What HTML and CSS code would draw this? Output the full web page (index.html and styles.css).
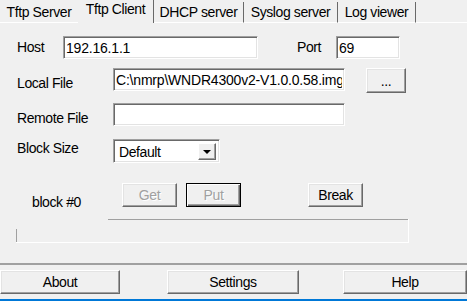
FILE: index.html
```html
<!DOCTYPE html>
<html lang="en">
<head>
    <meta charset="UTF-8">
    <meta name="viewport" content="width=device-width, initial-scale=1.0">
    <title>Tftp Client</title>
    <link rel="stylesheet" href="styles.css">
</head>
<body>
    <div class="window">
        <div class="tabs">
            <div class="tab tab-1">Tftp Server</div>
            <div class="tab tab-active tab-2">Tftp Client</div>
            <div class="tab tab-3">DHCP server</div>
            <div class="tab tab-4">Syslog server</div>
            <div class="tab tab-5">Log viewer</div>
            <div class="tab-fill"></div>
        </div>

        <div class="panel">
            <div class="row row-host">
                <label class="lbl lbl-host" for="host">Host</label>
                <input class="field field-host" id="host" type="text" value="192.16.1.1">
                <label class="lbl lbl-port" for="port">Port</label>
                <input class="field field-port" id="port" type="text" value="69">
            </div>

            <div class="row row-local">
                <label class="lbl lbl-wide" for="localFile">Local File</label>
                <input class="field field-file" id="localFile" type="text" value="C:\nmrp\WNDR4300v2-V1.0.0.58.img">
                <button class="btn btn-browse">...</button>
            </div>

            <div class="row row-remote">
                <label class="lbl lbl-wide" for="remoteFile">Remote File</label>
                <input class="field field-file" id="remoteFile" type="text" value="">
            </div>

            <div class="row row-block">
                <label class="lbl lbl-wide lbl-block">Block Size</label>
                <div class="combo">
                    <span class="combo-text">Default</span>
                    <span class="combo-btn"><span class="arrow"></span></span>
                </div>
            </div>

            <div class="row row-actions">
                <span class="status">block #0</span>
                <button class="btn btn-small" disabled>Get</button>
                <button class="btn btn-small btn-default btn-put" disabled>Put</button>
                <button class="btn btn-small btn-break">Break</button>
            </div>

            <div class="progress-frame">
                <div class="frame-top">
                    <div class="frame-gap"></div>
                    <div class="frame-line"></div>
                </div>
                <div class="frame-bottom"></div>
            </div>
        </div>

        <div class="footer">
            <button class="btn btn-about">About</button>
            <button class="btn btn-settings">Settings</button>
            <button class="btn btn-help">Help</button>
        </div>
        <div class="accent"></div>
    </div>
</body>
</html>
```

FILE: styles.css
```css
* {
    box-sizing: border-box;
}
body {
    margin: 0;
    background-color: #f0f0f0;
    font-family: "Liberation Sans", Arial, sans-serif;
    font-size: 14px;
    letter-spacing: -0.4px;
    line-height: 18px;
    color: #000;
}
.window {
    width: 467px;
    height: 301px;
    overflow: hidden;
    background-color: #f0f0f0;
}

/* tab strip */
.tabs {
    display: flex;
    align-items: flex-end;
    height: 23px;
}
.tab {
    height: 21px;
    padding-top: 1px;
    text-align: center;
    white-space: nowrap;
    border-bottom: 1px solid #fff;
    border-right: 1px solid #696969;
}
.tab-active {
    height: 23px;
    padding-top: 0;
    border-bottom: none;
}
.tab-1 { width: 78px; border-right: none; }
.tab-2 { width: 76px; }
.tab-3 { width: 90px; }
.tab-4 { width: 94px; }
.tab-5 { width: 78px; }
.tab-fill {
    flex: 1;
    height: 23px;
    border-bottom: 1px solid #fff;
}

/* page */
.panel {
    height: 242px;
    padding-top: 13px;
    border-bottom: 2px solid #a0a0a0;
}
.row {
    display: flex;
    align-items: flex-start;
    padding-left: 17px;
}
.row-host { height: 23px; }
.row-local { margin-top: 9px; height: 25px; }
.row-remote { margin-top: 10px; height: 23px; }
.row-block { margin-top: 13px; height: 24px; }
.row-actions { margin-top: 20px; height: 24px; padding-left: 32px; }

.lbl {
    white-space: nowrap;
    margin-top: 6px;
}
.lbl-host { width: 46px; margin-top: 2px; }
.lbl-port { width: 39px; margin-left: 39px; margin-top: 2px; }
.lbl-wide { width: 96px; }
.lbl-block { margin-top: 0; }

.field {
    height: 23px;
    margin: 0;
    padding: 0 2px;
    font: inherit;
    letter-spacing: -0.2px;
    color: #000;
    background-color: #fff;
    border: 1px solid;
    border-color: #a0a0a0 #fff #fff #a0a0a0;
    box-shadow: inset 1px 1px 0 #696969, inset -1px -1px 0 #e3e3e3;
    outline: none;
}
.field-host { width: 195px; }
.field-port { width: 64px; }
.field-file { width: 232px; }

/* combo box */
.combo {
    display: flex;
    justify-content: space-between;
    align-items: flex-start;
    width: 107px;
    height: 24px;
    padding: 1px 3px 0 5px;
    background-color: #fff;
    border: 1px solid;
    border-color: #a0a0a0 #fff #fff #a0a0a0;
    box-shadow: inset 1px 1px 0 #696969, inset -1px -1px 0 #e3e3e3;
}
.combo-text {
    margin-top: 2px;
}
.combo-btn {
    display: flex;
    justify-content: center;
    align-items: center;
    width: 18px;
    height: 17px;
    margin-top: 2px;
    background-color: #f0f0f0;
    border: 1px solid;
    border-color: #fff #696969 #696969 #fff;
    box-shadow: inset -1px -1px 0 #a0a0a0;
}
.arrow {
    width: 0;
    height: 0;
    margin-top: 1px;
    border-left: 4px solid transparent;
    border-right: 4px solid transparent;
    border-top: 4px solid #000;
}

/* buttons */
.btn {
    height: 24px;
    margin: 0;
    padding: 0;
    font: inherit;
    letter-spacing: inherit;
    color: #000;
    background-color: #f0f0f0;
    border: 1px solid;
    border-color: #fff #696969 #696969 #fff;
    box-shadow: inset -1px -1px 0 #a0a0a0, inset 1px 1px 0 #e3e3e3;
}
.btn:disabled {
    color: #a0a0a0;
    text-shadow: 1px 1px 0 #fff;
}
.btn-default {
    border-color: #000;
    box-shadow: inset 1px 1px 0 #fff, inset -1px -1px 0 #696969, inset -2px -2px 0 #a0a0a0;
}
.btn-browse {
    width: 40px;
    height: 25px;
    margin-left: 21px;
}
.status {
    width: 90px;
    margin-top: 10px;
    white-space: nowrap;
}
.btn-small { width: 55px; }
.btn-put { margin-left: 9px; }
.btn-break { margin-left: 67px; }

/* progress frame */
.progress-frame {
    width: 393px;
    height: 24px;
    margin-top: 12px;
    margin-left: 16px;
    border-right: 1px solid #fff;
    border-bottom: 1px solid #fff;
}
.frame-top {
    display: flex;
    height: 10px;
}
.frame-gap { width: 92px; }
.frame-line {
    flex: 1;
    border-top: 1px solid #a0a0a0;
}
.frame-bottom {
    height: 13px;
    border-left: 1px solid #a0a0a0;
}

/* footer */
.footer {
    display: flex;
    padding: 5px 0;
    height: 34px;
}
.btn-about { width: 120px; }
.btn-settings { width: 132px; margin-left: 47px; }
.btn-help { width: 124px; margin-left: 44px; }
.accent {
    height: 2px;
    background-color: #0078d7;
}
```
